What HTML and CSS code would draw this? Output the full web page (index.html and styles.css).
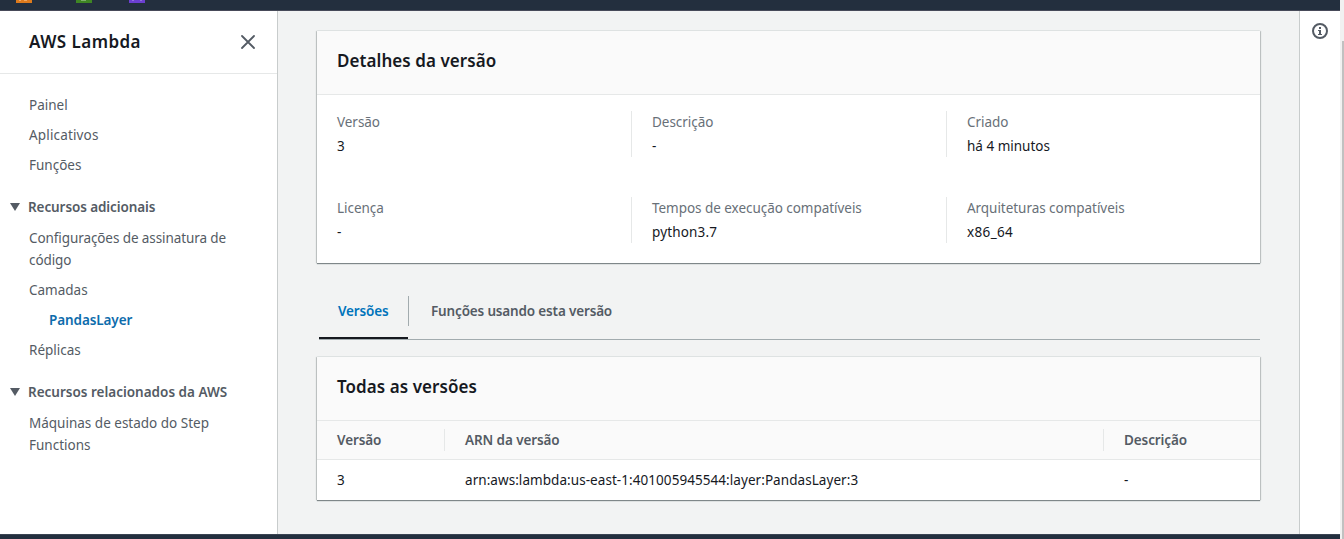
FILE: index.html
```html
<!DOCTYPE html>
<html lang="pt-BR">
<head>
<meta charset="utf-8">
<title>AWS Lambda</title>
<link rel="stylesheet" href="styles.css">
</head>
<body>
<div class="app">
  <header class="topbar">
    <svg class="svc" width="16" height="3"><rect width="16" height="3" fill="#dd7a1c"/><path d="M3 0h2v1H3zM8 0h3v1H8z" fill="#f0a765"/></svg>
    <svg class="svc" width="16" height="3"><rect width="16" height="3" fill="#3f8624"/><path d="M5 0h5v1H5z" fill="#7fae6c"/></svg>
    <svg class="svc" width="16" height="3"><rect width="16" height="3" fill="#6b3fd0"/><path d="M3 0h2v1H3zM11 0h2v1h-2z" fill="#9070dd"/></svg>
  </header>
  <div class="body">
    <aside class="sidebar">
      <div class="side-head">
        <h2 class="title product">AWS Lambda</h2>
        <svg width="14" height="14" viewBox="0 0 14 14"><path d="M1 1l12 12M13 1L1 13" stroke="#545b64" stroke-width="1.8" stroke-linecap="round"/></svg>
      </div>
      <nav class="nav">
        <a class="item">Painel</a>
        <a class="item wide">Aplicativos</a>
        <a class="item">Funções</a>
        <div class="group"><svg width="10" height="8"><path d="M0 0h10L5 8z" fill="#545b64"/></svg><span class="tight">Recursos adicionais</span></div>
        <a class="item tight">Configurações de assinatura de<br>código</a>
        <a class="item">Camadas</a>
        <a class="item active tight">PandasLayer</a>
        <a class="item">Réplicas</a>
        <div class="group"><svg width="10" height="8"><path d="M0 0h10L5 8z" fill="#545b64"/></svg><span>Recursos relacionados da AWS</span></div>
        <a class="item">Máquinas de estado do Step<br>Functions</a>
      </nav>
    </aside>
    <main class="main">
      <section class="card">
        <div class="card-head"><h2 class="title">Detalhes da versão</h2></div>
        <div class="details">
          <div class="cell"><div class="label">Versão</div><div>3</div></div>
          <div class="cell"><div class="label">Descrição</div><div>-</div></div>
          <div class="cell"><div class="label">Criado</div><div>há 4 minutos</div></div>
          <div class="cell"><div class="label">Licença</div><div>-</div></div>
          <div class="cell"><div class="label">Tempos de execução compatíveis</div><div class="wide">python3.7</div></div>
          <div class="cell"><div class="label">Arquiteturas compatíveis</div><div class="arch">x86_64</div></div>
        </div>
      </section>
      <div class="tabs">
        <div class="tab selected"><span>Versões</span></div>
        <div class="tab"><span>Funções usando esta versão</span></div>
      </div>
      <section class="card">
        <div class="card-head"><h2 class="title">Todas as versões</h2></div>
        <div class="row thead"><div>Versão</div><div>ARN da versão</div><div>Descrição</div></div>
        <div class="row"><div>3</div><div class="arn">arn:aws:lambda:us-east-1:401005945544:layer:PandasLayer:3</div><div>-</div></div>
      </section>
    </main>
    <aside class="info">
      <svg width="16" height="16" viewBox="0 0 16 16"><circle cx="8" cy="8" r="7" fill="none" stroke="#545b64" stroke-width="2"/><path d="M7 4h2v2H7zM6 7h3v4h1v1H6v-1h1V8H6z" fill="#545b64"/></svg>
    </aside>
  </div>
  <footer class="bottombar"></footer>
</div>
<div class="scrollbar"><div class="thumb"></div></div>
</body>
</html>
```
FILE: styles.css
```css
* { box-sizing: border-box; }
body {
  margin: 0;
  display: flex;
  height: 539px;
  overflow: hidden;
  background: #f2f3f3;
  font: 13.5px/22px "Noto Sans", sans-serif;
  color: #16191f;
}
.app { width: 1340px; display: flex; flex-direction: column; }
.topbar { height: 11px; background: #232f3e; border-bottom: 1px solid #474a59; padding-left: 16px; display: flex; gap: 44px; }
.svc { display: block; }
.svc:last-child { margin-left: -7px; }
.bottombar { height: 5px; background: #232f3e; border-top: 1px solid #3a4452; }
.body { flex: 1; display: flex; min-height: 0; }
.title { margin: 0; font-size: 17px; font-weight: 600; line-height: 22px; letter-spacing: 0.07px; }
.product { letter-spacing: 0.45px; }
.tight { letter-spacing: -0.09px; }
.wide { letter-spacing: 0.16px; }
.arch { letter-spacing: 0.35px; }
.arn { letter-spacing: 0.06px; }
.sidebar { width: 278px; background: #fff; border-right: 1px solid #c8cccc; }
.side-head { height: 63px; border-bottom: 1px solid #e6e8e8; padding: 0 22px 0 29px; display: flex; align-items: center; justify-content: space-between; }
.nav { padding: 20px 20px 0 29px; display: flex; flex-direction: column; gap: 8px; color: #545b64; }
.active { padding-left: 20px; color: #0d6cac; font-weight: 600; }
.group { display: flex; align-items: center; gap: 8px; margin: 12px 0 1px -19px; font-weight: 600; white-space: nowrap; }
.item { white-space: nowrap; }
.main { width: 1021px; padding: 20px 39px 0; }
.card { background: #fff; box-shadow: 0 1px 1px #7f8789, 1px 0 1px #c9cccc, -1px 0 1px #c9cccc, 0 -1px 0 #e9ebeb; }
.card-head { height: 64px; padding: 19px 20px 0; background: #fafafa; border-bottom: 1px solid #e6e8e8; }
.details { display: grid; grid-template-columns: 315px 315px 1fr; row-gap: 40px; padding: 16px 0 20px; height: 168px; }
.cell { height: 46px; padding-left: 20px; border-right: 1px solid #e6e8e8; white-space: nowrap; line-height: 22px; }
.cell:nth-child(3n) { border-right: 0; }
.label { color: #687078; margin-bottom: 2px; letter-spacing: -0.04px; }
.tabs { height: 77px; margin: 0 0 17px 2px; border-bottom: 1px solid #a2abae; display: flex; align-items: flex-end; font-weight: 600; color: #545b64; letter-spacing: -0.16px; }
.tab { height: 43px; display: flex; align-items: flex-start; }
.tab span { height: 30px; line-height: 30px; padding: 0 22px; white-space: nowrap; }
.selected { width: 89px; border-bottom: 2px solid #16191f; color: #0073bb; }
.selected span { width: 90px; flex: none; padding: 0 0 0 19px; border-right: 1px solid #a2abae; }
.selected + .tab span { padding-left: 23px; }
.row { display: grid; grid-template-columns: 128px 659px 1fr; height: 40px; align-items: center; }
.row > div { padding-left: 20px; white-space: nowrap; }
.thead { height: 39px; background: #fafafa; border-bottom: 1px solid #e6e8e8; color: #545b64; font-weight: 600; letter-spacing: -0.1px; }
.thead > div:not(:last-child) { border-right: 1px solid #e6e8e8; }
.info { width: 41px; background: #fff; border-left: 1px solid #c8cccc; padding: 12px 0 0 12px; }
.info svg { display: block; }
.scrollbar { width: 4px; padding: 41px 0 0 2px; background: #f1f1f1; }
.thumb { height: 498px; background: #c1c1c1; }
```
